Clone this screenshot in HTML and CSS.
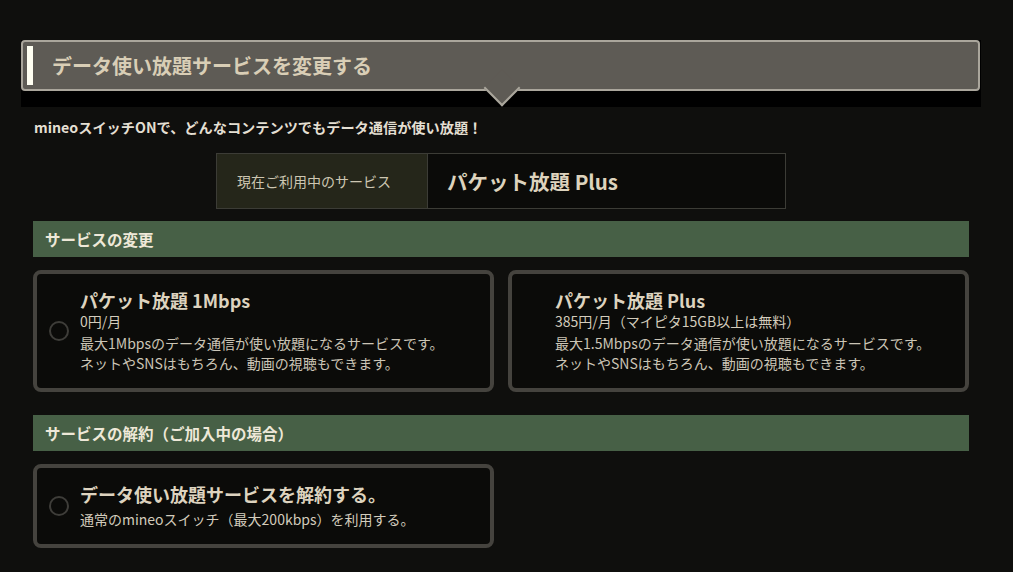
FILE: index.html
```html
<!DOCTYPE html>
<html lang="ja">
<head>
<meta charset="utf-8">
<link rel="stylesheet" href="styles.css">
</head>
<body>
<div class="page">
  <div class="heading-wrap">
    <h1 class="heading"><span class="accent"></span>データ使い放題サービスを変更する</h1>
  </div>
  <div class="content">
    <p class="lead">mineoスイッチONで、どんなコンテンツでもデータ通信が使い放題！</p>
    <div class="current">
      <div class="current-label">現在ご利用中のサービス</div>
      <div class="current-value">パケット放題 Plus</div>
    </div>
    <h2 class="section">サービスの変更</h2>
    <div class="cards">
      <label class="card">
        <span class="radio"></span>
        <span class="card-body">
          <span class="card-title">パケット放題 1Mbps</span>
          <span class="card-price">0円/月</span>
          <span class="card-desc">最大1Mbpsのデータ通信が使い放題になるサービスです。<br>ネットやSNSはもちろん、動画の視聴もできます。</span>
        </span>
      </label>
      <label class="card">
        <span class="radio hidden"></span>
        <span class="card-body">
          <span class="card-title">パケット放題 Plus</span>
          <span class="card-price">385円/月（マイピタ15GB以上は無料）</span>
          <span class="card-desc">最大1.5Mbpsのデータ通信が使い放題になるサービスです。<br>ネットやSNSはもちろん、動画の視聴もできます。</span>
        </span>
      </label>
    </div>
    <h2 class="section section-2">サービスの解約（ご加入中の場合）</h2>
    <div class="cards">
      <label class="card card-short">
        <span class="radio"></span>
        <span class="card-body">
          <span class="card-title">データ使い放題サービスを解約する。</span>
          <span class="card-price card-price-gap">通常のmineoスイッチ（最大200kbps）を利用する。</span>
        </span>
      </label>
    </div>
  </div>
</div>
</body>
</html>
```
FILE: styles.css
```css
* { box-sizing: border-box; }
html, body {
  margin: 0;
  padding: 0;
  background: #0f0f0d;
}
body {
  font-family: "Noto Sans CJK JP", "Noto Sans", sans-serif;
  color: #d8d0be;
}
.page {
  width: 960px;
  margin-left: 21px;
  padding-top: 40px;
}
.heading-wrap {
  background: #000;
  padding-bottom: 16px;
}
.heading {
  position: relative;
  margin: 0;
  height: 51px;
  width: 959px;
  background: #5e5b55;
  border: 2px solid #aaa69c;
  border-radius: 4px;
  display: flex;
  align-items: center;
  padding-left: 29px;
  font-size: 20px;
  font-weight: 700;
  color: #d9ceb6;
}
.heading .accent {
  position: absolute;
  left: 4px;
  top: 4px;
  width: 6px;
  height: 39px;
  background: #fffff2;
}
.heading::after {
  content: "";
  position: absolute;
  left: calc(50% - 12px);
  top: calc(100% - 14px);
  width: 24px;
  height: 24px;
  background: #5e5b55;
  border-right: 2px solid #aaa69c;
  border-bottom: 2px solid #aaa69c;
  transform: rotate(45deg);
}
.content {
  margin: 0 12px;
}
.lead {
  margin: 10px 0 0 1px;
  font-size: 14.2px;
  line-height: 20px;
  font-weight: 700;
  color: #e4dfd2;
}
.current {
  display: flex;
  width: 570px;
  height: 56px;
  margin: 16px auto 0;
  border: 1px solid #3c3c36;
}
.current-label {
  width: 211px;
  background: #25261a;
  border-right: 1px solid #3c3c36;
  display: flex;
  align-items: center;
  padding-left: 20px;
  font-size: 14px;
  color: #cdc6b2;
}
.current-value {
  flex: 1;
  background: #0b0b09;
  display: flex;
  align-items: center;
  padding-left: 19px;
  font-size: 20.5px;
  font-weight: 700;
  color: #ddd3bd;
}
.section {
  margin: 12px 0 0;
  height: 36px;
  background: #476046;
  display: flex;
  align-items: center;
  padding-left: 12px;
  font-size: 15.5px;
  font-weight: 700;
  color: #eee8d8;
}
.section-2 {
  margin-top: 23px;
}
.cards {
  display: grid;
  grid-template-columns: 461px 461px;
  column-gap: 14px;
  margin-top: 13px;
}
.card {
  display: flex;
  align-items: center;
  height: 122px;
  background: #0b0b09;
  border: 4px solid #45433e;
  border-radius: 8px;
  padding: 0 12px;
}
.card-short {
  height: 84px;
}
.radio {
  flex: none;
  width: 20px;
  height: 20px;
  border: 2px solid #3e3d39;
  border-radius: 50%;
  margin-right: 11px;
}
.radio.hidden {
  visibility: hidden;
}
.card-body {
  display: flex;
  flex-direction: column;
}
.card-title {
  font-size: 18px;
  line-height: 22px;
  font-weight: 700;
  color: #ddd3bf;
}
.card-price {
  font-size: 14px;
  line-height: 20px;
  color: #d3ccbc;
}
.card-price-gap {
  margin-top: 4px;
}
.card-desc {
  margin-top: 2px;
  font-size: 14px;
  line-height: 20px;
  color: #cbc5b6;
}
```
